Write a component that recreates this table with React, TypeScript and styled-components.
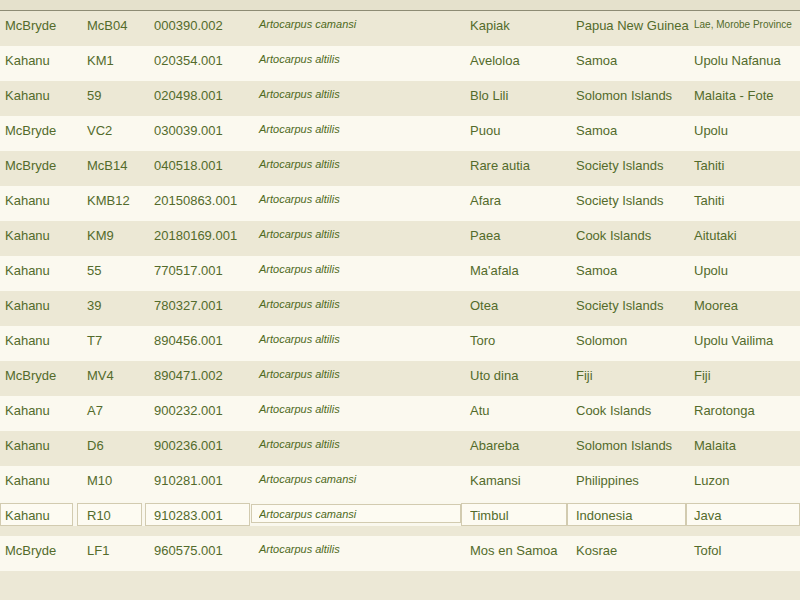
import React from "react";
import styled, { createGlobalStyle } from "styled-components";

const GlobalStyle = createGlobalStyle`
  html, body {
    margin: 0;
    padding: 0;
    background: #ece8d6;
  }
  body {
    font-family: "Liberation Sans", Arial, Helvetica, sans-serif;
    color: #536b2b;
  }
`;

const COLS = "77px 68px 106px 210px 106px 119px 114px";

const Table = styled.div`
  width: 800px;
  display: flex;
  flex-direction: column;
`;

const Header = styled.div`
  height: 10px;
  background: #e5e1cc;
  border-bottom: 1px solid #8d8b74;
`;

const Row = styled.div<{ $alt: boolean }>`
  display: grid;
  grid-template-columns: ${COLS};
  height: 35px;
  background: ${(p) => (p.$alt ? "#fbf9ef" : "#ece8d5")};
`;

const PAD = [5, 10, 9, 8, 9, 9, 8];

const Cell = styled.div<{ $pad: number }>`
  padding: 7px 0 0 ${(p) => p.$pad}px;
  font-size: 13px;
  line-height: 15px;
  white-space: nowrap;
  overflow: visible;
`;

const Species = styled(Cell)`
  padding-top: 7px;
  font-size: 11px;
  line-height: 13px;
  font-style: italic;
  color: #4f6a22;
`;

const Small = styled(Cell)`
  padding-top: 8px;
  font-size: 10px;
  line-height: 12px;
`;

const EditRow = styled.div`
  height: 35px;
  background: #ece8d5;
  display: flex;
  flex-direction: column;
`;

const EditBand = styled.div`
  height: 25px;
  box-sizing: border-box;
  padding-top: 2px;
  background: #faf8ee;
  display: grid;
  grid-template-columns: ${COLS};
  align-items: start;
`;

const Field = styled.input<{ $w: number; $pad: number; $italic?: boolean }>`
  box-sizing: border-box;
  width: ${(p) => p.$w}px;
  height: ${(p) => (p.$italic ? 19 : 23)}px;
  margin: ${(p) => (p.$italic ? "1px 0 0 0" : "0")};
  padding: 1px 0 0 ${(p) => p.$pad}px;
  border: 1px solid #d2cbb0;
  border-radius: 0;
  background: #fdfbf2;
  font-family: "Liberation Sans", Arial, Helvetica, sans-serif;
  font-size: ${(p) => (p.$italic ? 11 : 13)}px;
  font-style: ${(p) => (p.$italic ? "italic" : "normal")};
  color: ${(p) => (p.$italic ? "#4f6a22" : "#536b2b")};
  outline: none;
`;

type Rec = [string, string, string, string, string, string, string];

const rows: Rec[] = [
  ["McBryde", "McB04", "000390.002", "Artocarpus camansi", "Kapiak", "Papua New Guinea", "Lae, Morobe Province"],
  ["Kahanu", "KM1", "020354.001", "Artocarpus altilis", "Aveloloa", "Samoa", "Upolu Nafanua"],
  ["Kahanu", "59", "020498.001", "Artocarpus altilis", "Blo Lili", "Solomon Islands", "Malaita - Fote"],
  ["McBryde", "VC2", "030039.001", "Artocarpus altilis", "Puou", "Samoa", "Upolu"],
  ["McBryde", "McB14", "040518.001", "Artocarpus altilis", "Rare autia", "Society Islands", "Tahiti"],
  ["Kahanu", "KMB12", "20150863.001", "Artocarpus altilis", "Afara", "Society Islands", "Tahiti"],
  ["Kahanu", "KM9", "20180169.001", "Artocarpus altilis", "Paea", "Cook Islands", "Aitutaki"],
  ["Kahanu", "55", "770517.001", "Artocarpus altilis", "Ma'afala", "Samoa", "Upolu"],
  ["Kahanu", "39", "780327.001", "Artocarpus altilis", "Otea", "Society Islands", "Moorea"],
  ["Kahanu", "T7", "890456.001", "Artocarpus altilis", "Toro", "Solomon", "Upolu Vailima"],
  ["McBryde", "MV4", "890471.002", "Artocarpus altilis", "Uto dina", "Fiji", "Fiji"],
  ["Kahanu", "A7", "900232.001", "Artocarpus altilis", "Atu", "Cook Islands", "Rarotonga"],
  ["Kahanu", "D6", "900236.001", "Artocarpus altilis", "Abareba", "Solomon Islands", "Malaita"],
  ["Kahanu", "M10", "910281.001", "Artocarpus camansi", "Kamansi", "Philippines", "Luzon"],
  ["Kahanu", "R10", "910283.001", "Artocarpus camansi", "Timbul", "Indonesia", "Java"],
  ["McBryde", "LF1", "960575.001", "Artocarpus altilis", "Mos en Samoa", "Kosrae", "Tofol"],
];

const EDIT_INDEX = 14;
const FIELD_W = [73, 65, 105, 210, 106, 119, 114];
const FIELD_PAD = [4, 9, 8, 7, 8, 8, 7];

export default function App() {
  return (
    <>
      <GlobalStyle />
      <Table>
        <Header />
        {rows.map((r, i) =>
          i === EDIT_INDEX ? (
            <EditRow key={i}>
              <EditBand>
                {r.map((v, c) => (
                  <Field
                    key={c}
                    defaultValue={v}
                    $w={FIELD_W[c]}
                    $pad={FIELD_PAD[c]}
                    $italic={c === 3}
                  />
                ))}
              </EditBand>
            </EditRow>
          ) : (
            <Row key={i} $alt={i % 2 === 1}>
              {r.map((v, c) =>
                c === 3 ? (
                  <Species key={c} $pad={PAD[c]}>{v}</Species>
                ) : c === 6 && v.length > 16 ? (
                  <Small key={c} $pad={PAD[c]}>{v}</Small>
                ) : (
                  <Cell key={c} $pad={PAD[c]}>{v}</Cell>
                )
              )}
            </Row>
          )
        )}
      </Table>
    </>
  );
}
